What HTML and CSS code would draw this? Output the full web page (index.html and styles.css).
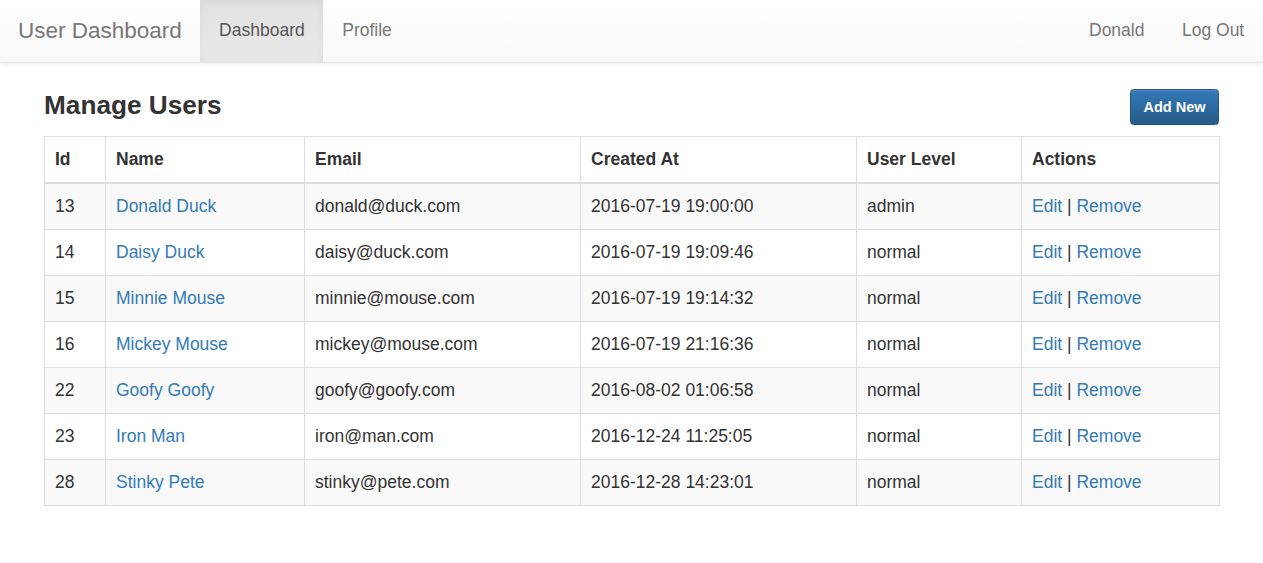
FILE: index.html
```html
<!DOCTYPE html>
<html>
<head>
<meta charset="utf-8">
<title>User Dashboard</title>
<link rel="stylesheet" href="styles.css">
</head>
<body>
<nav class="navbar">
  <div class="nav-left">
    <a class="brand" href="#">User Dashboard</a>
    <ul class="nav">
      <li class="active"><a href="#">Dashboard</a></li>
      <li><a href="#">Profile</a></li>
    </ul>
  </div>
  <ul class="nav">
    <li><a href="#">Donald</a></li>
    <li><a href="#">Log Out</a></li>
  </ul>
</nav>
<main class="container">
  <div class="header-row">
    <h3 class="title">Manage Users</h3>
    <a class="btn" href="#">Add New</a>
  </div>
  <table class="users">
    <colgroup>
      <col class="c-id"><col class="c-name"><col class="c-email"><col class="c-created"><col class="c-level"><col class="c-actions">
    </colgroup>
    <thead>
      <tr><th>Id</th><th>Name</th><th>Email</th><th>Created At</th><th>User Level</th><th>Actions</th></tr>
    </thead>
    <tbody>
      <tr><td>13</td><td><a href="#">Donald Duck</a></td><td>donald@duck.com</td><td>2016-07-19 19:00:00</td><td>admin</td><td><a href="#">Edit</a> | <a href="#">Remove</a></td></tr>
      <tr><td>14</td><td><a href="#">Daisy Duck</a></td><td>daisy@duck.com</td><td>2016-07-19 19:09:46</td><td>normal</td><td><a href="#">Edit</a> | <a href="#">Remove</a></td></tr>
      <tr><td>15</td><td><a href="#">Minnie Mouse</a></td><td>minnie@mouse.com</td><td>2016-07-19 19:14:32</td><td>normal</td><td><a href="#">Edit</a> | <a href="#">Remove</a></td></tr>
      <tr><td>16</td><td><a href="#">Mickey Mouse</a></td><td>mickey@mouse.com</td><td>2016-07-19 21:16:36</td><td>normal</td><td><a href="#">Edit</a> | <a href="#">Remove</a></td></tr>
      <tr><td>22</td><td><a href="#">Goofy Goofy</a></td><td>goofy@goofy.com</td><td>2016-08-02 01:06:58</td><td>normal</td><td><a href="#">Edit</a> | <a href="#">Remove</a></td></tr>
      <tr><td>23</td><td><a href="#">Iron Man</a></td><td>iron@man.com</td><td>2016-12-24 11:25:05</td><td>normal</td><td><a href="#">Edit</a> | <a href="#">Remove</a></td></tr>
      <tr><td>28</td><td><a href="#">Stinky Pete</a></td><td>stinky@pete.com</td><td>2016-12-28 14:23:01</td><td>normal</td><td><a href="#">Edit</a> | <a href="#">Remove</a></td></tr>
    </tbody>
  </table>
</main>
</body>
</html>
```
FILE: styles.css
```css
* { box-sizing: border-box; }
html, body { margin: 0; padding: 0; }
body {
  font-family: "Liberation Sans", Arial, Helvetica, sans-serif;
  font-size: 17.5px;
  line-height: 25px;
  color: #333;
  background: #fff;
}
a { color: #337ab7; text-decoration: none; }

.navbar {
  display: flex;
  justify-content: space-between;
  height: 63px;
  background: linear-gradient(to bottom, #ffffff 0%, #f8f8f8 100%);
  border-bottom: 1px solid #e7e7e7;
  box-shadow: 0 1px 6px rgba(0,0,0,0.08);
}
.nav-left { display: flex; }
.brand {
  display: block;
  padding: 17.5px 18.5px 19px 18px;
  font-size: 22.5px;
  line-height: 25px;
  color: #777;
}
.nav { display: flex; list-style: none; margin: 0; padding: 0; }
.nav li a {
  display: block;
  padding: 18px 18.75px 19px;
  line-height: 25px;
  color: #777;
}
.nav li.active a {
  background: linear-gradient(to bottom, #e2e2e2 0%, #e8e8e8 100%);
  box-shadow: inset 0 3px 9px rgba(0,0,0,0.05);
  color: #555;
}

.container {
  width: 1212.5px;
  margin: 0 auto;
  padding: 0 18.75px;
}
.header-row {
  display: flex;
  justify-content: space-between;
  align-items: flex-start;
  margin-top: 26px;
  margin-bottom: 11px;
}
.title {
  margin: 1px 0 0;
  font-size: 26.2px;
  line-height: 30px;
  font-weight: bold;
  color: #333;
}
.btn {
  display: inline-block;
  height: 36px;
  padding: 5px 12.5px;
  font-size: 14.5px;
  line-height: 24px;
  font-weight: bold;
  color: #fff;
  background: linear-gradient(to bottom, #337ab7 0%, #265a88 100%);
  border: 1px solid #245580;
  border-radius: 3.5px;
  box-shadow: inset 0 1px 0 rgba(255,255,255,0.15), 0 1px 1px rgba(0,0,0,0.075);
}

.users {
  width: 1175px;
  table-layout: fixed;
  border-collapse: collapse;
  border: 1px solid #ddd;
}
.c-id { width: 61px; }
.c-name { width: 199px; }
.c-email { width: 276px; }
.c-created { width: 276px; }
.c-level { width: 165px; }
.c-actions { width: 198px; }
.users th, .users td {
  border: 1px solid #ddd;
  padding: 10px;
  line-height: 25px;
  text-align: left;
  vertical-align: top;
}
.users th {
  font-weight: bold;
  border-bottom: 2px solid #ddd;
  padding-top: 10px;
  padding-bottom: 10px;
}
.users tbody tr:nth-child(odd) { background: #f9f9f9; }
```
